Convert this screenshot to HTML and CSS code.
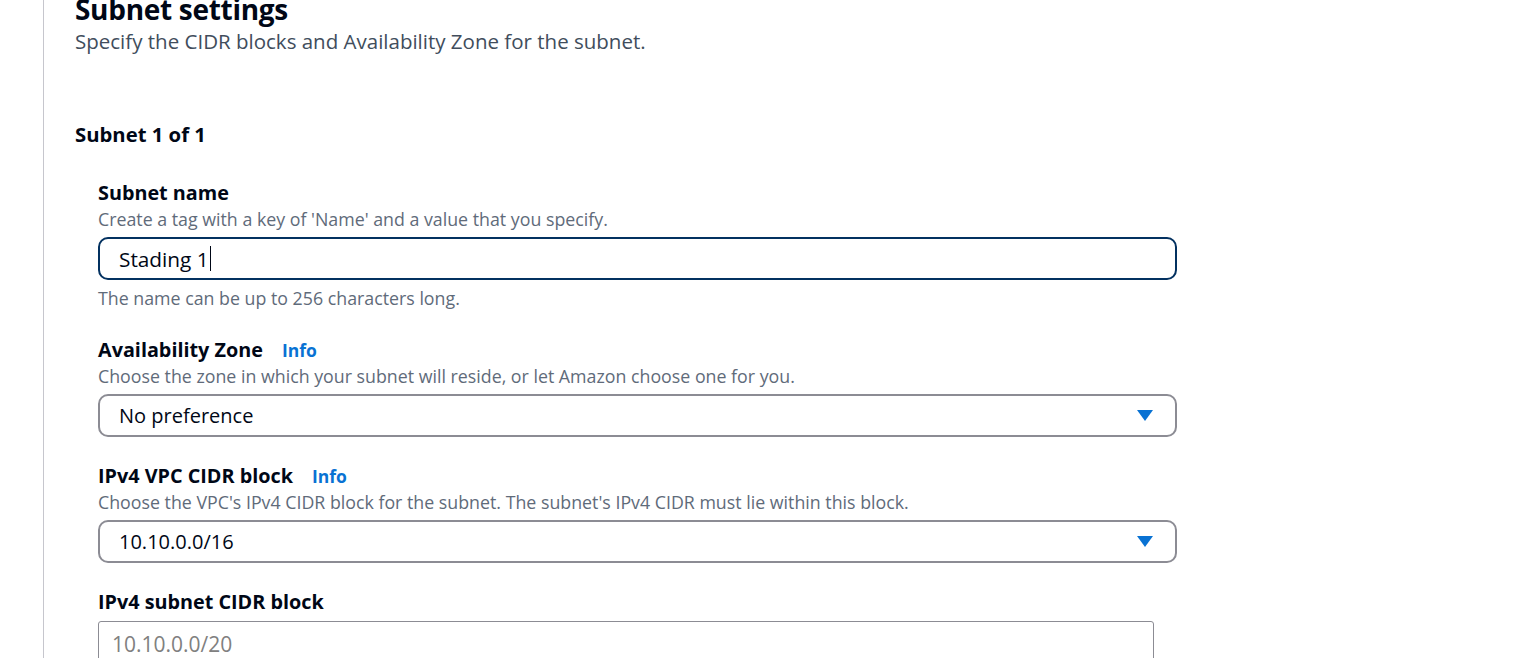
FILE: index.html
```html
<!DOCTYPE html>
<html lang="en">
<head>
<meta charset="utf-8">
<title>Subnet settings</title>
<link rel="stylesheet" href="styles.css">
</head>
<body>
<div class="page">
  <div class="panel">
    <h2 class="title">Subnet settings</h2>
    <p class="subtitle">Specify the CIDR blocks and Availability Zone for the subnet.</p>

    <h3 class="subnet-count">Subnet 1 of 1</h3>

    <div class="fields">
      <div class="field">
        <div class="label-row"><span class="label">Subnet name</span></div>
        <div class="desc">Create a tag with a key of 'Name' and a value that you specify.</div>
        <div class="input focused"><span class="value">Stading 1</span><span class="caret"></span></div>
        <div class="hint">The name can be up to 256 characters long.</div>
      </div>

      <div class="field">
        <div class="label-row"><span class="label">Availability Zone</span><a class="info">Info</a></div>
        <div class="desc">Choose the zone in which your subnet will reside, or let Amazon choose one for you.</div>
        <div class="input select"><span class="value">No preference</span>
          <svg class="arrow" width="16" height="12" viewBox="0 0 16 12"><path d="M0 0 H16 L8 11 Z" fill="#0972d3"/></svg>
        </div>
      </div>

      <div class="field">
        <div class="label-row"><span class="label">IPv4 VPC CIDR block</span><a class="info">Info</a></div>
        <div class="desc">Choose the VPC's IPv4 CIDR block for the subnet. The subnet's IPv4 CIDR must lie within this block.</div>
        <div class="input select"><span class="value">10.10.0.0/16</span>
          <svg class="arrow" width="16" height="12" viewBox="0 0 16 12"><path d="M0 0 H16 L8 11 Z" fill="#0972d3"/></svg>
        </div>
      </div>

      <div class="field">
        <div class="label-row"><span class="label">IPv4 subnet CIDR block</span></div>
        <div class="input plain"><span class="placeholder">10.10.0.0/20</span></div>
      </div>
    </div>
  </div>
</div>
</body>
</html>
```

FILE: styles.css
```css
html, body {
  margin: 0;
  padding: 0;
  background: #ffffff;
  height: 100%;
  overflow: hidden;
}

body {
  font-family: "Open Sans", "Noto Sans", Arial, sans-serif;
  color: #000716;
}

.page {
  margin-left: 43px;
  border-left: 1px solid #c6c6cd;
  min-height: 100%;
  width: 1480px;
}

.panel {
  padding-left: 31px;
  margin-top: -8px;
}

.title {
  margin: 0;
  font-size: 28px;
  line-height: 34px;
  font-weight: 700;
  letter-spacing: -0.3px;
}

.subtitle {
  margin: 2px 0 0;
  font-size: 20.5px;
  line-height: 26px;
  color: #414d5c;
}

.subnet-count {
  margin: 67px 0 0;
  font-size: 20.3px;
  line-height: 26px;
  font-weight: 700;
}

.fields {
  margin-left: 23px;
  margin-top: 33px;
  width: 1079px;
  display: flex;
  flex-direction: column;
  gap: 26px;
}

.field {
  display: flex;
  flex-direction: column;
}

.label-row {
  display: flex;
  align-items: baseline;
  gap: 19px;
  height: 26px;
  line-height: 26px;
}

.label {
  font-size: 19.8px;
  font-weight: 700;
}

.info {
  color: #0972d3;
  font-size: 17.5px;
  font-weight: 700;
  cursor: pointer;
}

.desc, .hint {
  font-size: 17.8px;
  line-height: 26px;
  color: #5f6b7a;
}

.hint {
  margin-top: 5px;
}

.input {
  box-sizing: border-box;
  height: 43px;
  margin-top: 5px;
  border-radius: 10px;
  display: flex;
  align-items: center;
  padding: 0 22px 0 19px;
  font-size: 20px;
  background: #fff;
}

.focused {
  border: 2.5px solid #033160;
}

.focused .value {
  font-size: 20.8px;
}

.select {
  border: 2.5px solid #8c8c94;
  justify-content: space-between;
}

.caret {
  display: inline-block;
  width: 1.5px;
  height: 25px;
  background: #000716;
  margin-left: 1px;
}

.plain {
  width: 1056px;
  height: 60px;
  margin-top: 6px;
  border: 1px solid #8c8c94;
  border-radius: 3px;
  align-items: flex-start;
  padding: 8px 13px 0;
}

.placeholder {
  color: #808080;
  font-size: 21px;
}
```
